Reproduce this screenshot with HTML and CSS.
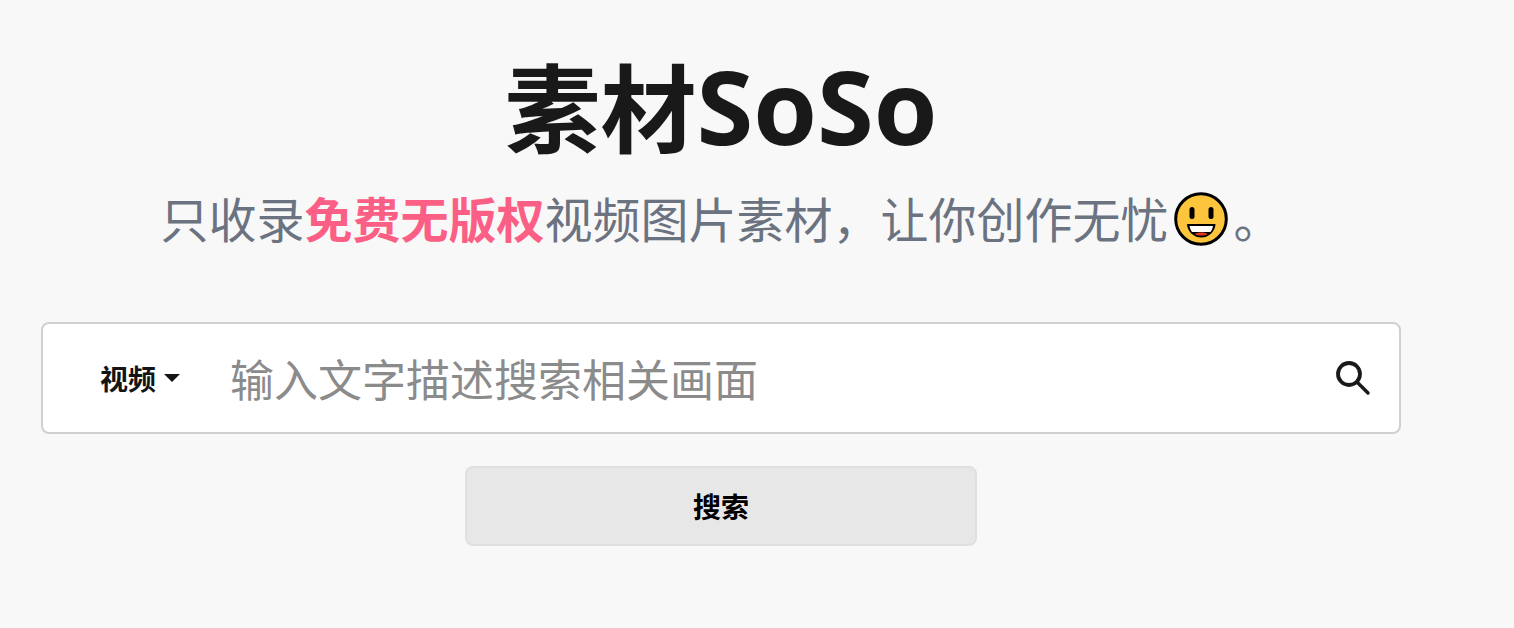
FILE: index.html
```html
<!DOCTYPE html>
<html lang="zh-CN">
<head>
<meta charset="utf-8">
<title>素材SoSo</title>
<link rel="stylesheet" href="styles.css">
</head>
<body>
<main class="page">
  <h1 class="title">素材<span class="latin">SoSo</span></h1>
  <p class="subtitle">只收录<strong class="accent">免费无版权</strong>视频图片素材，让你创作无忧<svg class="emoji" viewBox="0 0 54 54" aria-hidden="true"><circle cx="27" cy="27" r="25.300" fill="#fdc53c" stroke="#000" stroke-width="3"/><rect x="15.500" y="15" width="5" height="12" rx="2.500" fill="#000"/><rect x="34.500" y="15" width="5" height="12" rx="2.500" fill="#000"/><path d="M13 32 H41.500 C41.500 39 35 45.500 27.300 45.500 C19.500 45.500 13 39 13 32 Z" fill="#000"/><path d="M15.500 34 H39 C38.500 36.500 37.500 38.500 36.500 40 H18 C17 38.500 16 36.500 15.500 34 Z" fill="#fff"/><path d="M21 42 C23 40 31.500 40 33.500 42 C31 44 23.500 44 21 42 Z" fill="#e0391f"/></svg>。</p>
  <form class="search">
    <button type="button" class="type">视频<span class="caret"></span></button>
    <input class="query" type="text" placeholder="输入文字描述搜索相关画面">
    <svg class="icon" viewBox="0 0 36 36" aria-hidden="true"><circle cx="14" cy="14" r="11" fill="none" stroke="#1a1a1a" stroke-width="3.800"/><path d="M22 22 L33 33" fill="none" stroke="#1a1a1a" stroke-width="3.400" stroke-linecap="round"/></svg>
  </form>
  <button type="button" class="submit">搜索</button>
</main>
</body>
</html>
```
FILE: styles.css
```css
* { box-sizing: border-box; }
html, body { margin: 0; height: 100%; }
body {
  background: #f8f8f8;
  color: #141414;
  font-family: "Noto Sans CJK SC", "Noto Sans", sans-serif;
  overflow: hidden;
}
.page {
  width: 1442px;
  padding: 44px 41px 0;
  display: flex;
  flex-direction: column;
  align-items: center;
}
.title {
  margin: 0;
  font-size: 96px;
  line-height: 120px;
  font-weight: 700;
  color: #191919;
}
.latin {
  font-family: "Open Sans", "Noto Sans", sans-serif;
  font-size: 103px;
  line-height: 0;
}
.subtitle {
  margin: 17px 0 0;
  font-size: 48px;
  line-height: 72px;
  color: #6b7280;
  display: flex;
  align-items: center;
}
.accent { color: #fb5f85; font-weight: 700; }
.emoji { width: 54px; height: 54px; margin: 4px 6px 0 5px; }
.search {
  margin-top: 69px;
  width: 1360px;
  height: 112px;
  background: #fff;
  border: 2px solid #d0d0d0;
  border-radius: 8px;
  display: flex;
  align-items: center;
  padding: 0 28px 0 57px;
}
.type {
  border: 0;
  background: none;
  padding: 0;
  font: inherit;
  font-size: 28px;
  font-weight: 700;
  color: #141414;
  display: flex;
  align-items: center;
  flex: none;
}
.caret {
  width: 0;
  height: 0;
  margin-left: 8px;
  border-left: 8px solid transparent;
  border-right: 8px solid transparent;
  border-top: 8px solid #141414;
}
.query {
  flex: 1;
  min-width: 0;
  border: 0;
  outline: 0;
  background: none;
  margin-left: 50px;
  padding: 0;
  font: inherit;
  font-size: 44px;
  color: #141414;
}
.query::placeholder { color: #8b8b8b; opacity: 1; }
.icon { width: 36px; height: 36px; flex: none; }
.submit {
  margin-top: 32px;
  width: 512px;
  height: 80px;
  background: #e7e7e7;
  border: 2px solid #e0e0e0;
  border-radius: 8px;
  font: inherit;
  font-size: 28px;
  font-weight: 700;
  color: #000;
}
```
